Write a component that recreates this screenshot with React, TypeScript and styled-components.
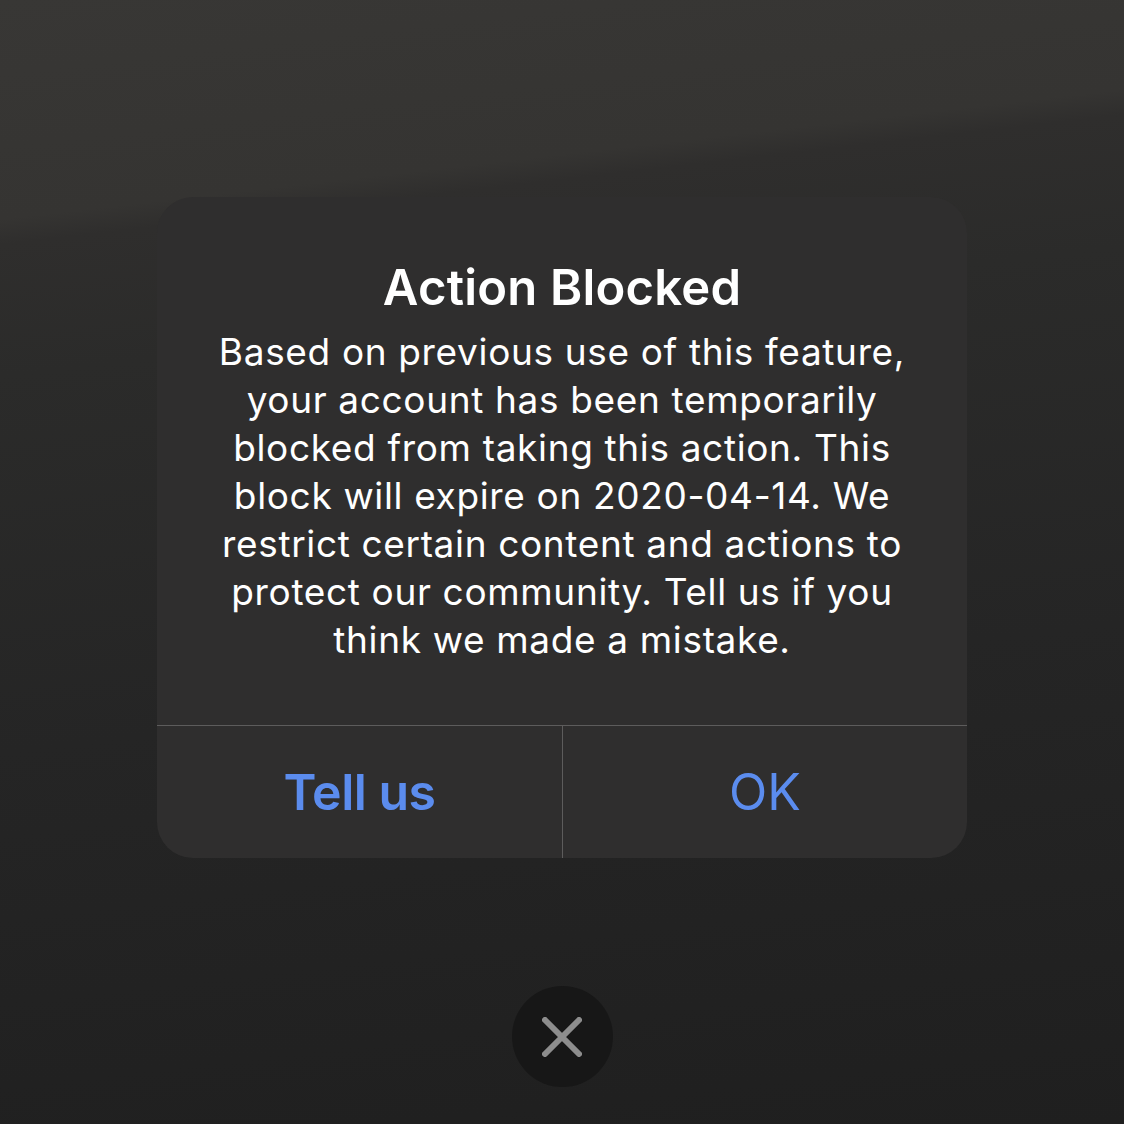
import React from "react";
import styled, { createGlobalStyle } from "styled-components";

const Global = createGlobalStyle`
  html, body { margin: 0; padding: 0; background: #222; }
  * { box-sizing: border-box; }
`;

const Screen = styled.div`
  width: 1124px;
  height: 1124px;
  display: flex;
  flex-direction: column;
  align-items: center;
  font-family: Inter, "Liberation Sans", sans-serif;
  background: linear-gradient(
    173.4deg,
    #383735 0%,
    #353432 17.5%,
    #2f2e2d 19.5%,
    #2b2b2a 30%,
    #252525 60%,
    #1f1f1f 100%
  );
`;

const Alert = styled.div`
  margin-top: 197px;
  width: 810px;
  height: 661px;
  border-radius: 36px;
  background: #2f2e2e;
  display: flex;
  flex-direction: column;
  overflow: hidden;
`;

const Content = styled.div`
  flex: 1;
  display: flex;
  flex-direction: column;
  align-items: center;
  padding: 61px 40px 0;
  color: #ffffff;
  text-align: center;
`;

const Title = styled.h1`
  margin: 0 0 10px;
  font-size: 49px;
  font-weight: 600;
  line-height: 60px;
  letter-spacing: 0.2px;
`;

const Message = styled.p`
  margin: 0;
  font-size: 37px;
  font-weight: 400;
  line-height: 48px;
  letter-spacing: 0.65px;
`;

const Actions = styled.div`
  height: 133px;
  display: grid;
  grid-template-columns: 1fr 1fr;
  border-top: 1px solid #5d5c5c;
`;

const ActionButton = styled.button<{ $bold?: boolean }>`
  border: none;
  background: transparent;
  color: #5b8cee;
  font-family: inherit;
  font-size: 50px;
  font-weight: ${(p) => (p.$bold ? 600 : 400)};
  letter-spacing: ${(p) => (p.$bold ? "-0.5px" : "0")};
  padding: 0;
  & + & {
    border-left: 1px solid #5d5c5c;
  }
`;

const CloseButton = styled.button`
  margin-top: 128px;
  width: 101px;
  height: 101px;
  border-radius: 50%;
  border: none;
  background: #171717;
  display: flex;
  align-items: center;
  justify-content: center;
  padding: 0;
`;

export default function App() {
  return (
    <>
      <Global />
      <Screen>
        <Alert>
          <Content>
            <Title>Action Blocked</Title>
            <Message>
              Based on previous use of this feature,
              <br />
              your account has been temporarily
              <br />
              blocked from taking this action. This
              <br />
              block will expire on 2020-04-14. We
              <br />
              restrict certain content and actions to
              <br />
              protect our community. Tell us if you
              <br />
              think we made a mistake.
            </Message>
          </Content>
          <Actions>
            <ActionButton $bold>Tell us</ActionButton>
            <ActionButton>OK</ActionButton>
          </Actions>
        </Alert>
        <CloseButton aria-label="Close">
          <svg width="40" height="40" viewBox="0 0 40 40">
            <path
              d="M3 3 L37 37 M37 3 L3 37"
              stroke="#8d8d8d"
              strokeWidth="6"
              strokeLinecap="round"
            />
          </svg>
        </CloseButton>
      </Screen>
    </>
  );
}
